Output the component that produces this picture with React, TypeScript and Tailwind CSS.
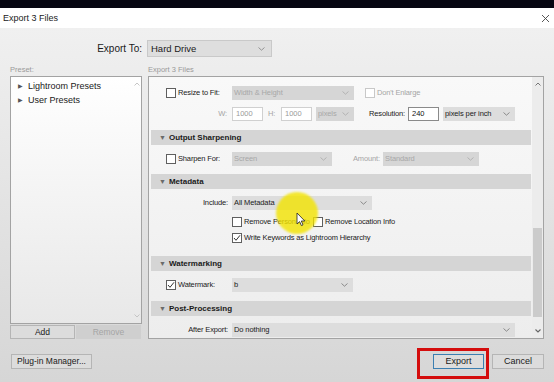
import React from "react";

const Chev = ({ c = "#8a8a8a" }: { c?: string }) => (
  <svg width="7" height="4" viewBox="0 0 7 4" className="shrink-0">
    <polyline points="0.5,0.5 3.5,3.2 6.5,0.5" fill="none" stroke={c} strokeWidth="0.9" />
  </svg>
);

const Select = ({
  w,
  text,
  disabled,
  cls = "",
}: {
  w: string;
  text: string;
  disabled?: boolean;
  cls?: string;
}) => (
  <div
    className={`${w} h-[14px] flex items-center justify-between pl-[2px] pr-[5px] text-[7.5px] tracking-[-0.1px] whitespace-nowrap ${
      disabled ? "bg-[#d6d6d6] text-[#a8a8a8]" : "bg-[#dddddd] text-[#1a1a1a]"
    } ${cls}`}
  >
    <span className="leading-none">{text}</span>
    <Chev c={disabled ? "#b0b0b0" : "#808080"} />
  </div>
);

const Input = ({ w, text, disabled }: { w: string; text: string; disabled?: boolean }) => (
  <div
    className={`${w} h-[14px] flex items-center pl-[3px] text-[7.5px] bg-white border ${
      disabled ? "border-[#d0d0d0] text-[#9a9a9a]" : "border-[#8a8a8a] text-[#111]"
    }`}
  >
    <span className="leading-none">{text}</span>
  </div>
);

const Check = ({ checked, disabled }: { checked?: boolean; disabled?: boolean }) => (
  <div
    className={`w-[10px] h-[10px] shrink-0 bg-white border flex items-center justify-center ${
      disabled ? "border-[#c8c8c8]" : "border-[#5f5f5f]"
    }`}
  >
    {checked && (
      <svg width="8" height="8" viewBox="0 0 8 8">
        <polyline points="1,4 3,6.3 7,1.3" fill="none" stroke="#333" strokeWidth="1" />
      </svg>
    )}
  </div>
);

const Header = ({ title }: { title: string }) => (
  <div className="h-[15px] ml-[2px] mr-[1px] bg-[#d5d5d5] flex items-center pl-[8px] gap-[3px]">
    <span className="text-[7px] text-[#6a6a6a] leading-none">▼</span>
    <span className="text-[8px] font-bold text-[#1a1a1a] leading-none">{title}</span>
  </div>
);

const Row = ({ children, cls = "" }: { children: React.ReactNode; cls?: string }) => (
  <div className={`h-[14px] flex items-center whitespace-nowrap ${cls}`}>{children}</div>
);

const T = "text-[7.5px] tracking-[-0.15px] leading-none whitespace-nowrap";

const LabelCell = ({ children }: { children?: React.ReactNode }) => (
  <div className={`w-[83px] shrink-0 flex justify-end pr-[4px] text-[#1a1a1a] ${T}`}>{children}</div>
);

const CheckCell = ({ label, checked }: { label: string; checked?: boolean }) => (
  <div className={`w-[83px] shrink-0 flex items-center pl-[17px] gap-[2px] text-[#1a1a1a] ${T}`}>
    <Check checked={checked} />
    <span>{label}</span>
  </div>
);

const Btn = ({
  children,
  w,
  disabled,
  cls = "",
}: {
  children: React.ReactNode;
  w: string;
  disabled?: boolean;
  cls?: string;
}) => (
  <div
    className={`${w} h-[14px] flex items-center justify-center text-[8.5px] leading-none border ${
      disabled
        ? "bg-[#cfcfcf] border-[#cfcfcf] text-[#a5a5a5]"
        : "bg-[#dcdcdc] border-[#b5b5b5] text-[#1a1a1a]"
    } ${cls}`}
  >
    {children}
  </div>
);

export default function App() {
  return (
    <div
      className="relative w-[554px] h-[382px] overflow-hidden flex flex-col bg-[#e4e4e4]"
      style={{ fontFamily: '"Liberation Sans", Arial, sans-serif' }}
    >
      {/* top black strip */}
      <div className="h-[8px] bg-[#070712] shrink-0" />
      {/* title bar */}
      <div className="h-[20px] bg-white shrink-0 flex items-center justify-between pl-[3px] pr-[4px]">
        <span className="text-[9px] text-[#222] leading-none">Export 3 Files</span>
        <svg width="9" height="9" viewBox="0 0 9 9">
          <path d="M1 1L8 8M8 1L1 8" stroke="#444" strokeWidth="0.9" />
        </svg>
      </div>
      {/* body */}
      <div className="flex-1 flex flex-col bg-gradient-to-b from-[#f0f0f0] to-[#d6d6d6] px-[10px]">
        {/* export to row */}
        <div className="mt-[12px] h-[17px] flex items-center">
          <div className="w-[132px] flex justify-end text-[10px] text-[#1a1a1a] leading-none">Export To:</div>
          <div className="ml-[5px] w-[125px] h-[17px] bg-[#dedede] border border-[#c9c9c9] flex items-center justify-between pl-[3px] pr-[6px]">
            <span className="text-[9.5px] text-[#1a1a1a] leading-none">Hard Drive</span>
            <Chev />
          </div>
        </div>
        {/* labels */}
        <div className="mt-[6px] h-[13px] flex items-center text-[7.5px] text-[#9a9a9a] leading-none">
          <div className="w-[138px]">Preset:</div>
          <div>Export 3 Files</div>
        </div>
        {/* panels */}
        <div className="flex gap-[6px]">
          {/* left */}
          <div className="w-[132px] flex flex-col">
            <div className="h-[248px] border border-[#a3a3a3] bg-gradient-to-b from-white to-[#e8e8e8] flex">
              <div className="flex-1 pt-[4px] pl-[7px] flex flex-col gap-[4px]">
                <div className="flex items-center gap-[5px] h-[10px]">
                  <span className="text-[6px] text-[#555] leading-none">▶</span>
                  <span className="text-[9px] text-[#1a1a1a] leading-none">Lightroom Presets</span>
                </div>
                <div className="flex items-center gap-[5px] h-[10px]">
                  <span className="text-[6px] text-[#555] leading-none">▶</span>
                  <span className="text-[9px] text-[#1a1a1a] leading-none">User Presets</span>
                </div>
              </div>
              <div className="w-[9px] flex flex-col justify-between items-center py-[5px]">
                <svg width="6" height="4" viewBox="0 0 6 4">
                  <polyline points="0.5,3.5 3,1 5.5,3.5" fill="none" stroke="#c0c0c0" strokeWidth="0.9" />
                </svg>
                <svg width="6" height="4" viewBox="0 0 6 4">
                  <polyline points="0.5,0.5 3,3 5.5,0.5" fill="none" stroke="#c0c0c0" strokeWidth="0.9" />
                </svg>
              </div>
            </div>
            <div className="mt-[1px] flex gap-[1px]">
              <Btn w="w-[65px]">Add</Btn>
              <Btn w="w-[65px]" disabled>
                Remove
              </Btn>
            </div>
          </div>
          {/* right */}
          <div className="w-[396px] h-[263px] border border-[#a3a3a3] flex bg-gradient-to-b from-[#f9f9f9] to-[#ededed]">
            <div className="flex-1 flex flex-col">
              <Row cls="mt-[9px]">
                <CheckCell label="Resize to Fit:" />
                <Select w="w-[122px]" text="Width & Height" disabled />
                <div className={`ml-[11px] flex items-center gap-[2px] text-[#a5a5a5] ${T}`}>
                  <Check disabled />
                  <span>Don't Enlarge</span>
                </div>
              </Row>
              <Row cls="mt-[7px]">
                <div className={`w-[83px] shrink-0 flex justify-end pr-[5px] text-[#a5a5a5] ${T}`}>W:</div>
                <Input w="w-[31px]" text="1000" disabled />
                <span className={`ml-[5px] w-[13px] text-[#a5a5a5] ${T}`}>H:</span>
                <Input w="w-[31px]" text="1000" disabled />
                <Select w="w-[38px]" text="pixels" disabled cls="ml-[4px]" />
                <span className={`ml-[15px] w-[39px] text-[#1a1a1a] ${T}`}>Resolution:</span>
                <Input w="w-[31px]" text="240" />
                <Select w="w-[72px]" text="pixels per inch" cls="ml-[4px]" />
              </Row>
              <div className="mt-[9px]">
                <Header title="Output Sharpening" />
              </div>
              <Row cls="mt-[7px]">
                <CheckCell label="Sharpen For:" />
                <Select w="w-[100px]" text="Screen" disabled />
                <span className={`ml-[21px] w-[30px] text-[#a5a5a5] ${T}`}>Amount:</span>
                <Select w="w-[96px]" text="Standard" disabled />
              </Row>
              <div className="mt-[8px]">
                <Header title="Metadata" />
              </div>
              <Row cls="mt-[7px]">
                <LabelCell>Include:</LabelCell>
                <Select w="w-[140px]" text="All Metadata" />
              </Row>
              <Row cls="mt-[5px]">
                <LabelCell />
                <div className={`w-[81px] shrink-0 flex items-center gap-[2px] text-[#1a1a1a] ${T}`}>
                  <Check />
                  <span>Remove Person Info</span>
                </div>
                <div className={`flex items-center gap-[2px] text-[#1a1a1a] ${T}`}>
                  <Check />
                  <span>Remove Location Info</span>
                </div>
              </Row>
              <Row cls="mt-[2px]">
                <LabelCell />
                <div className={`flex items-center gap-[2px] text-[#1a1a1a] ${T}`}>
                  <Check checked />
                  <span>Write Keywords as Lightroom Hierarchy</span>
                </div>
              </Row>
              <div className="mt-[11px]">
                <Header title="Watermarking" />
              </div>
              <Row cls="mt-[7px]">
                <CheckCell label="Watermark:" checked />
                <Select w="w-[121px]" text="b" />
              </Row>
              <div className="mt-[9px]">
                <Header title="Post-Processing" />
              </div>
              <Row cls="mt-[7px]">
                <LabelCell>After Export:</LabelCell>
                <Select w="w-[283px]" text="Do nothing" />
              </Row>
            </div>
            {/* scrollbar */}
            <div className="w-[11px] flex flex-col items-center bg-[#ececec]">
              <div className="h-[14px] flex items-center">
                <svg width="6" height="4" viewBox="0 0 6 4">
                  <polyline points="0.5,3.5 3,1 5.5,3.5" fill="none" stroke="#777" strokeWidth="1" />
                </svg>
              </div>
              <div className="flex-1 w-full flex flex-col">
                <div className="h-[137px]" />
                <div className="h-[89px] mx-[1px] bg-[#cbcbcb]" />
              </div>
              <div className="h-[14px] flex items-center">
                <svg width="6" height="4" viewBox="0 0 6 4">
                  <polyline points="0.5,0.5 3,3 5.5,0.5" fill="none" stroke="#666" strokeWidth="1.1" />
                </svg>
              </div>
            </div>
          </div>
        </div>
        {/* bottom buttons */}
        <div className="mt-[15px] h-[15px] flex items-center">
          <Btn w="w-[81px]" cls="ml-[1px] h-[15px]">
            Plug-in Manager...
          </Btn>
          <div className="ml-[341px] w-[51px] h-[15px] flex items-center justify-center text-[9px] leading-none bg-[#dddddd] border border-[#3c7fb1] text-[#1a1a1a]">
            Export
          </div>
          <Btn w="w-[52px]" cls="ml-[8px] h-[15px] text-[9px]">
            Cancel
          </Btn>
        </div>
      </div>
      {/* red annotation box */}
      <div className="absolute left-[417px] top-[348px] w-[72px] h-[31px] border-[3px] border-[#d40d0d]" />
      {/* cursor highlight */}
      <div className="absolute left-[276px] top-[192px] w-[42px] h-[42px] rounded-full bg-[#f3e400] opacity-80 blur-[1px]" />
      <svg className="absolute left-[296px] top-[212px]" width="10" height="15" viewBox="0 0 10 15">
        <path d="M1 1 L1 12 L3.6 9.6 L5.4 13.6 L7 12.9 L5.3 9 L8.8 9 Z" fill="white" stroke="#222" strokeWidth="0.8" />
      </svg>
    </div>
  );
}
